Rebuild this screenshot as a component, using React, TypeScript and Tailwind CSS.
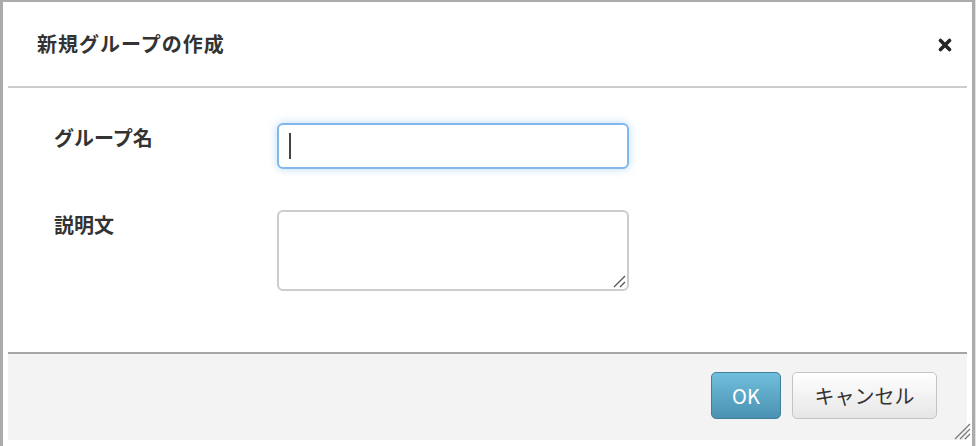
import React from "react";

export default function App() {
  const font = { fontFamily: '"Noto Sans CJK JP", "Noto Sans", sans-serif' };
  return (
    <div className="w-[976px] h-[446px] bg-white overflow-hidden relative" style={font}>
      <div className="h-[446px] w-[975px] border-l-[3px] border-t-[2px] border-r-[3px] border-[#ababab] flex flex-col px-[5px]">
        <div className="h-[86px] flex items-center justify-between border-b-[2px] border-[#cccccc] shrink-0">
          <div className="pl-[29px] text-[20px] font-bold text-[#333333] leading-none tracking-[1px]">新規グループの作成</div>
          <div className="pr-[15px] pt-[1px]">
            <svg width="14" height="14" viewBox="0 0 14 14">
              <path d="M2.5 2.5 L11.5 11.5 M11.5 2.5 L2.5 11.5" stroke="#262626" strokeWidth="3.6" strokeLinecap="round" />
            </svg>
          </div>
        </div>
        <div className="flex-1 pt-[35px] pl-[46px]">
          <div className="flex items-start">
            <div className="w-[223px] pt-[1px] text-[20px] font-bold text-[#333333] leading-[28px]">グループ名</div>
            <div className="w-[352px] h-[46px] rounded-[6px] border-[2px] border-[#80b8ec] shadow-[0_0_8px_rgba(102,175,233,0.45)] bg-white flex items-center pl-[10px]">
              <div className="w-[2px] h-[26px] bg-[#444]" />
            </div>
          </div>
          <div className="flex items-start mt-[41px]">
            <div className="w-[223px] pt-[1px] text-[20px] font-bold text-[#333333] leading-[28px]">説明文</div>
            <div className="w-[352px] h-[81px] rounded-[6px] border-[2px] border-[#cccccc] bg-white relative">
              <svg className="absolute right-[1px] bottom-[1px]" width="14" height="14" viewBox="0 0 14 14">
                <path d="M2 13 L13 2 M8 13 L13 8" stroke="#555" strokeWidth="1.3" />
              </svg>
            </div>
          </div>
        </div>
        <div className="h-[88px] shrink-0 bg-[#f3f3f3] border-t-[2px] border-[#a6a6a6] flex items-start justify-end pt-[18px] pr-[30px] gap-[11px] relative">
          <button className="w-[70px] h-[47px] rounded-[5px] border border-[#3f7f99] bg-gradient-to-b from-[#70bedd] to-[#4b92b2] text-white text-[20px] leading-none">OK</button>
          <button className="w-[145px] h-[47px] rounded-[5px] border border-[#c4c4c4] bg-gradient-to-b from-[#ffffff] to-[#e6e6e6] text-[#333333] text-[20px] leading-none">キャンセル</button>
          <svg className="absolute right-[-4px] bottom-0" width="20" height="20" viewBox="0 0 20 20">
            <path d="M4 19 L19 4 M9 19 L19 9 M14 19 L19 14" stroke="#777" strokeWidth="1.2" />
          </svg>
        </div>
        <div className="h-[6px] shrink-0 bg-white" />
      </div>
      <div className="absolute right-0 top-0 w-[1px] h-[446px] bg-[#e2e2e2]" />
    </div>
  );
}
